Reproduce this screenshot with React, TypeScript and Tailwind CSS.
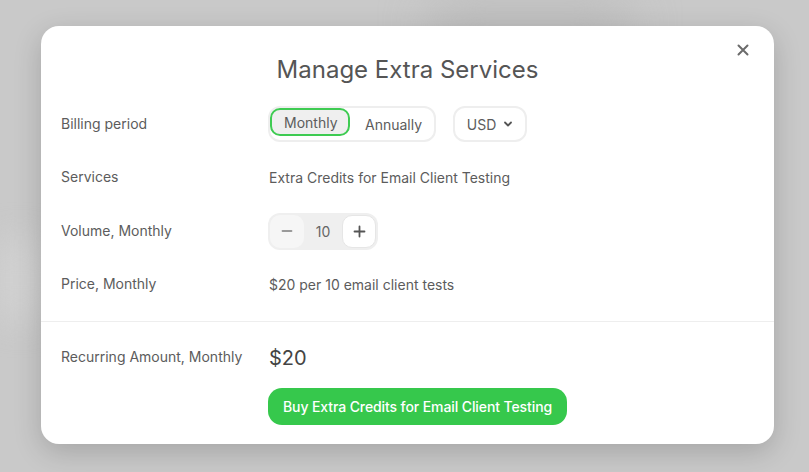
import {useState} from 'react'

const font = {fontFamily: 'Inter, "Noto Sans", sans-serif'}

export default function App() {
    const [period, setPeriod] = useState<'monthly' | 'annually'>('monthly')
    const [volume, setVolume] = useState(10)

    return (
        <div className="relative w-[809px] h-[472px] overflow-hidden bg-[#c9c9c9]" style={font}>
            {/* blurred page behind the dialog */}
            <div className="absolute left-[430px] top-[6px] w-[200px] h-[40px] rounded-2xl bg-[#b9b9b9] blur-xl" />
            <div className="absolute left-[0px] top-[240px] w-[40px] h-[80px] bg-[#d2d2d2] blur-lg" />

            <div className="relative px-[41px] pt-[26px]">
                <div className="w-[733px] h-[418px] bg-white rounded-[18px] shadow-[0_8px_28px_rgba(0,0,0,0.18)] relative">
                    <button className="absolute right-[24px] top-[17px] w-[14px] h-[14px] flex items-center justify-center text-[#6b6b6b]">
                        <svg width="12" height="12" viewBox="0 0 12 12" fill="none" stroke="currentColor" strokeWidth="2" strokeLinecap="round">
                            <path d="M1.5 1.5 L10.5 10.5 M10.5 1.5 L1.5 10.5" />
                        </svg>
                    </button>

                    <div className="pt-[28px] px-[20px]">
                        <h2 className="text-center text-[24px] leading-[32px] text-[#555555] font-normal">
                            Manage Extra Services
                        </h2>

                        <div className="mt-[20px] flex flex-col gap-[17.5px] pb-[18.5px] text-[14px] text-[#5c5c5c]">
                            {/* Billing period */}
                            <div className="flex items-center h-9">
                                <div className="w-[207px] -mt-[1px]">Billing period</div>
                                <div className="flex items-center gap-[17px]">
                                    <div className="flex h-9 p-[2px] border-2 border-[#eeeeee] rounded-[12px]">
                                        <button
                                            onClick={() => setPeriod('monthly')}
                                            className={
                                                period === 'monthly'
                                                    ? 'h-full px-[12px] -m-[2px] w-[80px] border-2 border-[#3ecb52] bg-[#efefef] rounded-[10px] text-[#5c5c5c]'
                                                    : 'h-full px-[12px] w-[78px] rounded-[10px] text-[#5c5c5c]'
                                            }>
                                            Monthly
                                        </button>
                                        <button
                                            onClick={() => setPeriod('annually')}
                                            className="h-full pl-[12px] pr-[10px] ml-[5px] rounded-[10px] text-[#5c5c5c]">
                                            Annually
                                        </button>
                                    </div>
                                    <button className="h-9 w-[74px] border-2 border-[#eeeeee] rounded-[12px] flex items-center justify-center gap-[7px] text-[#5c5c5c]">
                                        USD
                                        <svg width="10" height="10" viewBox="0 0 10 10" fill="none" stroke="#555" strokeWidth="1.8" strokeLinecap="round" strokeLinejoin="round">
                                            <path d="M2 3.5 L5 6.5 L8 3.5" />
                                        </svg>
                                    </button>
                                </div>
                            </div>

                            {/* Services */}
                            <div className="flex items-center h-9">
                                <div className="w-[208px] -mt-[2px]">Services</div>
                                <div>Extra Credits for Email Client Testing</div>
                            </div>

                            {/* Volume */}
                            <div className="flex items-center h-9">
                                <div className="w-[207px] -mt-[1px]">Volume, Monthly</div>
                                <div className="flex items-center h-[37px] w-[110px] p-[2px] bg-[#efefef] rounded-[12px]">
                                    <button
                                        onClick={() => setVolume(Math.max(0, volume - 10))}
                                        className="w-[34px] h-full rounded-[10px] bg-[#f6f6f6] flex items-center justify-center">
                                        <svg width="12" height="12" viewBox="0 0 12 12" stroke="#9a9a9a" strokeWidth="1.8" strokeLinecap="round">
                                            <path d="M1.5 6 H10.5" />
                                        </svg>
                                    </button>
                                    <div className="flex-1 text-center text-[#666666]">{volume}</div>
                                    <button
                                        onClick={() => setVolume(volume + 10)}
                                        className="w-[34px] h-full rounded-[10px] bg-white border border-[#e6e6e6] flex items-center justify-center">
                                        <svg width="13" height="13" viewBox="0 0 13 13" stroke="#555" strokeWidth="1.8" strokeLinecap="round">
                                            <path d="M1.5 6.5 H11.5 M6.5 1.5 V11.5" />
                                        </svg>
                                    </button>
                                </div>
                            </div>

                            {/* Price */}
                            <div className="flex items-center h-9">
                                <div className="w-[208px] -mt-[2px]">Price, Monthly</div>
                                <div>$20 per 10 email client tests</div>
                            </div>
                        </div>
                    </div>

                    <div className="border-t border-[#eeeeee] px-[20px] pt-[22px]">
                        <div className="flex items-center h-7">
                            <div className="w-[208px] text-[14px] text-[#5c5c5c] -mt-[4px]">Recurring Amount, Monthly</div>
                            <div className="text-[20px] text-[#444444]">${volume * 2}</div>
                        </div>
                        <div className="mt-[16px] pl-[207px]">
                            <button className="h-[37px] px-[15px] rounded-[14px] bg-[#36c84c] text-white text-[14px] font-medium tracking-[-0.1px]">
                                Buy Extra Credits for Email Client Testing
                            </button>
                        </div>
                    </div>
                </div>
            </div>
        </div>
    )
}
